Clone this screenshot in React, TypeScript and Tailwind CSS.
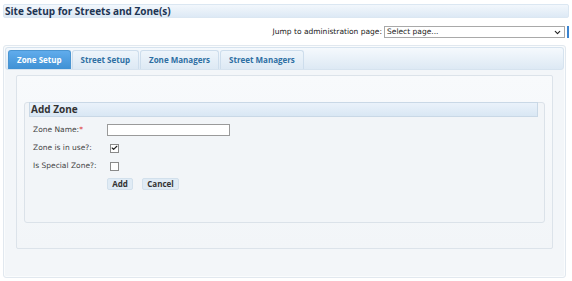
import { Check, ChevronDown } from 'lucide-react';

const tabs = ['Zone Setup', 'Street Setup', 'Zone Managers', 'Street Managers'];

export default function App() {
  return (
    <div className="h-[281px] w-[572px] bg-white px-[3px] pt-[4px] font-['DejaVu_Sans',sans-serif] text-[#333]">
      <div className="h-[14px] rounded-[2px] border border-[#dbe7f2] bg-gradient-to-b from-[#f2f7fc] to-[#dde9f5] pl-[1px] font-['Open_Sans',sans-serif] text-[10px] font-bold leading-[12px] text-[#1e3553]">
        Site Setup for Streets and Zone(s)
      </div>

      <div className="mt-[8px] flex h-[12px] items-center justify-end gap-[2px] text-[7.5px]">
        <span className="text-[#222]">Jump to administration page:</span>
        <div className="flex h-[12px] w-[181px] items-center justify-between border border-[#a9a9a9] bg-white pl-[2px] pr-[2px]">
          <span className="text-[#222]">Select page...</span>
          <ChevronDown className="h-[9px] w-[9px] text-[#222]" strokeWidth={3} />
        </div>
        <div className="h-[12px] w-[2px] bg-[#3c84d0]" />
      </div>

      <div className="mt-[7px] h-[233px] w-[563px] rounded-[3px] border border-[#e1e8ef] bg-[#f3f6f9] p-[1px] shadow-[inset_0_0_0_1px_#fafcfd]">
        <div className="flex h-[23px] items-end gap-[1px] rounded-[3px] border border-[#d6e3ef] bg-gradient-to-b from-[#f5f9fd] to-[#dde9f4] px-[2px]">
          {tabs.map((t, i) => (
            <div
              key={t}
              className={
                i === 0
                  ? "flex h-[19px] items-center rounded-t-[3px] border border-b-0 border-[#4a95d2] bg-gradient-to-b from-[#60acec] to-[#3f91d4] px-[8px] font-['Open_Sans',sans-serif] text-[8px] font-bold text-white"
                  : "flex h-[19px] items-center rounded-t-[3px] border border-b-0 border-[#cdddec] bg-gradient-to-b from-[#eef5fb] to-[#dde9f4] px-[8px] font-['Open_Sans',sans-serif] text-[8px] font-bold text-[#2e6fa3]"
              }
            >
              {t}
            </div>
          ))}
        </div>

        <div className="mx-[11px] mt-[5px] h-[174px] rounded-[2px] border border-[#dce3ea] bg-gradient-to-b from-[#f8fafc] to-[#f2f5f8] px-[7px] pt-[26px]">
          <div className="h-[121px] rounded-[3px] border border-[#dbe2e9] bg-[#f2f5f8] pl-[4px] pr-[6px]">
            <div className="-mt-[1px] h-[15px] border border-[#c9d8e6] bg-gradient-to-b from-[#eaf2fa] to-[#d9e7f4] pl-[1px] font-['Open_Sans',sans-serif] text-[10px] font-bold leading-[13px] text-[#333]">
              Add Zone
            </div>
            <div className="pl-[4px] pt-[7px] text-[7.5px] text-[#444]">
              <div className="flex h-[12px] items-center">
                <span className="w-[74px]">
                  Zone Name:<span className="text-[#d33]">*</span>
                </span>
                <div className="h-[12px] w-[123px] border border-[#9a9a9a] bg-white" />
              </div>
              <div className="mt-[6px] flex h-[12px] items-center">
                <span className="w-[77px]">Zone is in use?:</span>
                <div className="flex h-[9px] w-[9px] items-center justify-center border border-[#8a8a8a] bg-white">
                  <Check className="h-[8px] w-[8px] text-[#222]" strokeWidth={4} />
                </div>
              </div>
              <div className="mt-[6px] flex h-[12px] items-center">
                <span className="w-[77px]">Is Special Zone?:</span>
                <div className="h-[9px] w-[9px] border border-[#8a8a8a] bg-white" />
              </div>
              <div className="mt-[6px] flex gap-[9px] pl-[74px]">
                <div className="flex h-[12px] w-[26px] items-center justify-center rounded-[2px] border border-[#d2e0ec] bg-[#e0ebf5] font-['Open_Sans',sans-serif] text-[8px] font-bold text-[#333]">
                  Add
                </div>
                <div className="flex h-[12px] w-[37px] items-center justify-center rounded-[2px] border border-[#d2e0ec] bg-[#e0ebf5] font-['Open_Sans',sans-serif] text-[8px] font-bold text-[#333]">
                  Cancel
                </div>
              </div>
            </div>
          </div>
        </div>
      </div>
    </div>
  );
}
